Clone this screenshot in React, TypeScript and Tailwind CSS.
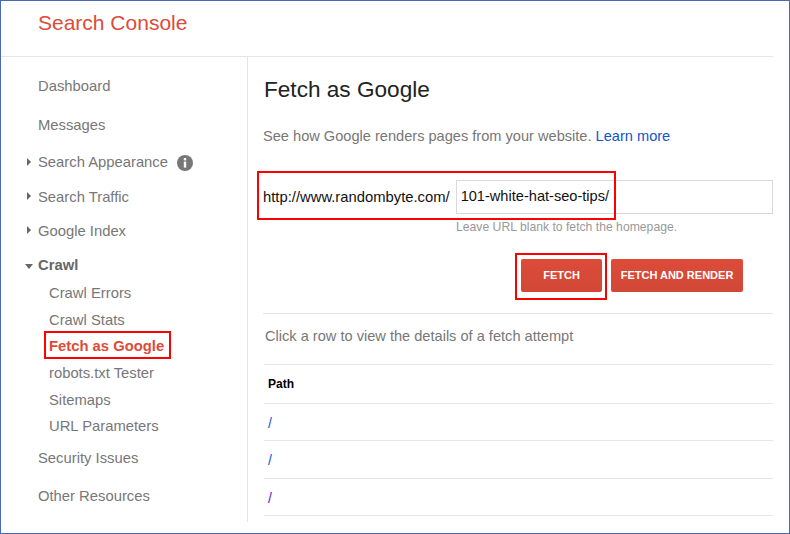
import type { ReactNode } from "react";

const font = "font-['Liberation_Sans',Arial,sans-serif]";

function Caret({ open }: { open?: boolean }) {
  return open ? (
    <span className="absolute left-[24px] top-1/2 -translate-y-[1px] w-0 h-0 border-x-[4px] border-x-transparent border-t-[5px] border-t-[#666]" />
  ) : (
    <span className="absolute left-[26px] top-1/2 -translate-y-[5px] w-0 h-0 border-y-[4px] border-y-transparent border-l-[4px] border-l-[#666]" />
  );
}

function NavItem({ label, h, caret, bold, children }: { label: string; h: number; caret?: "open" | "closed"; bold?: boolean; children?: ReactNode }) {
  return (
    <div className="relative flex items-center pl-[37px] text-[14.8px] text-[#777]" style={{ height: h }}>
      {caret && <Caret open={caret === "open"} />}
      <span className={bold ? "font-bold text-[#666]" : ""}>{label}</span>
      {children}
    </div>
  );
}

function SubItem({ label, active }: { label: string; active?: boolean }) {
  return (
    <div className={`relative flex items-center h-[26.6px] pl-[48px] text-[14.8px] ${active ? "font-bold text-[#dd4b39]" : "text-[#777]"}`}>
      {label}
      {active && <span className="absolute left-[43px] -top-[2px] w-[127px] h-[28px] border-[2px] border-[#f00]" />}
    </div>
  );
}

export default function App() {
  return (
    <div className={`${font} w-[790px] h-[534px] bg-white border border-[#4a69b5] overflow-hidden`}>
      <div className="w-[772px] h-[56px] border-b border-[#e5e5e5] pl-[37px] pt-[9px]">
        <div className="text-[21px] leading-[26px] text-[#dd4b39]">Search Console</div>
      </div>
      <div className="flex">
        <div className="w-[247px] h-[465px] border-r border-[#e5e5e5] shrink-0 pt-[10px]">
          <NavItem label="Dashboard" h={38} />
          <NavItem label="Messages" h={40} />
          <NavItem label="Search Appearance" h={35} caret="closed">
            <span className="ml-[9px] w-[16px] h-[16px] rounded-full bg-[#777] flex items-center justify-center">
              <svg width="16" height="16" viewBox="0 0 16 16">
                <rect x="6.8" y="3" width="2.4" height="2.4" fill="#fff" />
                <rect x="6.8" y="6.6" width="2.4" height="6" fill="#fff" />
              </svg>
            </span>
          </NavItem>
          <NavItem label="Search Traffic" h={34} caret="closed" />
          <NavItem label="Google Index" h={34} caret="closed" />
          <NavItem label="Crawl" h={34} caret="open" bold />
          <div className="-mt-[2px]">
            <SubItem label="Crawl Errors" />
            <SubItem label="Crawl Stats" />
            <SubItem label="Fetch as Google" active />
            <SubItem label="robots.txt Tester" />
            <SubItem label="Sitemaps" />
            <SubItem label="URL Parameters" />
          </div>
          <NavItem label="Security Issues" h={38} />
          <NavItem label="Other Resources" h={38} />
        </div>
        <div className="relative w-[525px] pl-[15px]">
          <h1 className="mt-[17px] ml-[1px] text-[22.6px] leading-[32px] text-[#222]">Fetch as Google</h1>
          <p className="mt-[20px] text-[14.6px] leading-[20px] text-[#777]">
            See how Google renders pages from your website. <span className="text-[#1155cc]">Learn more</span>
          </p>
          <div className="mt-[34px] flex items-center h-[34px]">
            <span className="w-[193px] text-[14.8px] text-[#111]">http://www.randombyte.com/</span>
            <div className="w-[318px] h-[34px] border border-[#d9d9d9] pl-[4px] flex items-center text-[14.6px] text-[#111]">101-white-hat-seo-tips/</div>
          </div>
          <div className="pl-[193px] mt-[6px] text-[12.2px] leading-[14px] text-[#999]">Leave URL blank to fetch the homepage.</div>
          <div className="mt-[25px] flex justify-end pr-[30px] gap-[9px]">
            <div className="w-[81px] h-[33px] rounded-[2px] bg-linear-to-b from-[#dd4b39] to-[#d14836] flex items-center justify-center text-[11px] font-bold text-white">FETCH</div>
            <div className="w-[132px] h-[33px] rounded-[2px] bg-linear-to-b from-[#dd4b39] to-[#d14836] flex items-center justify-center text-[11px] font-bold text-white">FETCH AND RENDER</div>
          </div>
          <div className="mt-[21px] border-t border-[#e5e5e5] h-[51px] flex items-center pb-[4px] pl-[2px] text-[14.6px] text-[#777]">Click a row to view the details of a fetch attempt</div>
          <div className="ml-[1px]">
            <div className="border-t border-[#e5e5e5] h-[39px] flex items-center pl-[4px] text-[12px] font-bold text-black">Path</div>
            <div className="border-t border-[#e5e5e5] h-[37px] flex items-center pt-[2px] pl-[4px] text-[14px] text-[#1155cc]">/</div>
            <div className="border-t border-[#e5e5e5] h-[38px] flex items-center pt-[2px] pl-[4px] text-[14px] text-[#1155cc]">/</div>
            <div className="border-t border-[#e5e5e5] h-[37px] flex items-center pt-[2px] pl-[4px] text-[14px] text-[#6611cc]">/</div>
            <div className="border-t border-[#e5e5e5]" />
          </div>
          <span className="absolute left-[9px] top-[114px] w-[359px] h-[49px] border-[2px] border-[#f00] pointer-events-none" />
          <span className="absolute left-[267px] top-[196px] w-[92px] h-[47px] border-[2px] border-[#f00] pointer-events-none" />
        </div>
      </div>
    </div>
  );
}
